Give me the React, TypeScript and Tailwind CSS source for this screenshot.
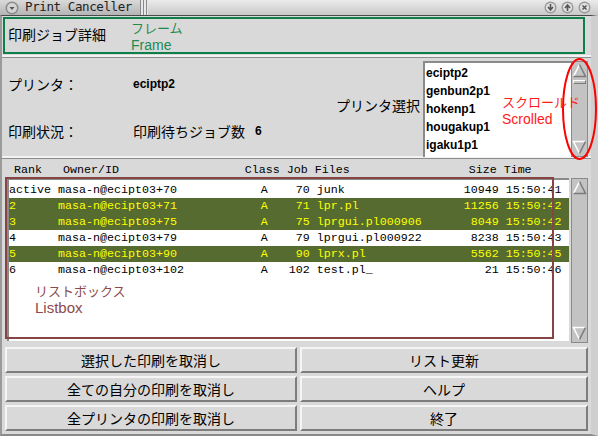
import React from 'react'

const jp = "font-['Noto_Sans_CJK_JP','Noto_Sans',sans-serif]"
const mono = "font-['Liberation_Mono',monospace]"
const bold = "font-['Liberation_Sans',Arial,sans-serif] font-bold"
const sans = "font-['Liberation_Sans',Arial,sans-serif]"

type Job = { rank: string; owner: string; job: string; file: string; size: string; time: string; sel?: boolean }

const jobs: Job[] = [
  { rank: 'active', owner: 'masa-n@ecipt03+70', job: '70', file: 'junk', size: '10949', time: '15:50:41' },
  { rank: '2', owner: 'masa-n@ecipt03+71', job: '71', file: 'lpr.pl', size: '11256', time: '15:50:42', sel: true },
  { rank: '3', owner: 'masa-n@ecipt03+75', job: '75', file: 'lprgui.pl000906', size: '8049', time: '15:50:42', sel: true },
  { rank: '4', owner: 'masa-n@ecipt03+79', job: '79', file: 'lprgui.pl000922', size: '8238', time: '15:50:43' },
  { rank: '5', owner: 'masa-n@ecipt03+90', job: '90', file: 'lprx.pl', size: '5562', time: '15:50:45', sel: true },
  { rank: '6', owner: 'masa-n@ecipt03+102', job: '102', file: 'test.pl_', size: '21', time: '15:50:46' },
]

const printers = ['eciptp2', 'genbun2p1', 'hokenp1', 'hougakup1', 'igaku1p1']

const header =
  ' Rank'.padEnd(8) + 'Owner/ID'.padEnd(26) + 'Class Job ' + 'Files'.padEnd(22) + 'Size Time'

const rowText = (j: Job) =>
  j.rank.padEnd(7) + j.owner.padEnd(29) + 'A' + j.job.padStart(6) + ' ' + j.file.padEnd(20) + j.size.padStart(6) + ' ' + j.time

const Arrow = ({ up }: { up?: boolean }) => (
  <svg width="15" height="15" viewBox="0 0 15 15" className="block">
    {up ? (
      <>
        <polyline points="1.5,13.5 7.5,1.5" stroke="#ffffff" strokeWidth="1.5" fill="none" />
        <polyline points="7.5,1.5 13.5,13.5 1.5,13.5" stroke="#7a7a7a" strokeWidth="1.5" fill="none" />
      </>
    ) : (
      <>
        <polyline points="13.5,1.5 1.5,1.5 7.5,13.5" stroke="#ffffff" strokeWidth="1.5" fill="none" />
        <polyline points="7.5,13.5 13.5,1.5" stroke="#7a7a7a" strokeWidth="1.5" fill="none" />
      </>
    )}
  </svg>
)

const TitleButton = ({ kind }: { kind: 'down' | 'up' | 'close' }) => (
  <svg width="13" height="13" viewBox="0 0 13 13">
    <circle cx="6.5" cy="6.5" r="6" fill="#9a9a9a" />
    <circle cx="6.5" cy="6.5" r="4.6" fill="#e0e0e0" />
    {kind === 'down' && <path d="M6.5 3v5M4 6l2.5 3L9 6" stroke="#555" strokeWidth="1.6" fill="none" />}
    {kind === 'up' && <path d="M6.5 10V5M4 7l2.5-3L9 7" stroke="#555" strokeWidth="1.6" fill="none" />}
    {kind === 'close' && <path d="M4.5 4.5l4 4M8.5 4.5l-4 4" stroke="#555" strokeWidth="1.5" fill="none" />}
  </svg>
)

const Btn = ({ label }: { label: string }) => (
  <button className={`h-[26px] w-full bg-[#d9d9d9] border-2 border-t-[#f5f5f5] border-l-[#f5f5f5] border-b-[#7d7d7d] border-r-[#7d7d7d] text-[14px] text-black leading-none ${jp}`}>
    {label}
  </button>
)

export default function App() {
  return (
    <div className="relative w-[598px] h-[436px] bg-[#d9d9d9] overflow-hidden text-black">
      {/* title bar */}
      <div className="flex h-[15px] items-center bg-gradient-to-b from-[#ebebeb] to-[#c9c9c9]">
        <div className="flex h-full w-[140px] items-center gap-[6px] pl-[5px] bg-gradient-to-b from-[#dadada] to-[#b4b4b4]">
          <svg width="14" height="14" viewBox="0 0 14 14">
            <circle cx="7" cy="7" r="6.5" fill="#8a8a8a" />
            <circle cx="7" cy="7" r="5" fill="#d4d4d4" />
            <path d="M4.5 6h5L7 9z" fill="#555" />
          </svg>
          <span className="text-[12.5px] leading-none text-[#222] tracking-[-0.4px] font-['DejaVu_Sans_Mono',monospace]">Print Canceller</span>
        </div>
        <div className="h-full w-[8px] bg-[repeating-linear-gradient(90deg,#8a8a8a_0px,#8a8a8a_1px,#e8e8e8_1px,#e8e8e8_3px)]" />
        <div className="flex-1" />
        <div className="flex items-center gap-[4px] pr-[7px]">
          <TitleButton kind="down" />
          <TitleButton kind="up" />
          <TitleButton kind="close" />
        </div>
      </div>

      {/* window body */}
      <div className="flex flex-col h-[421px] border-t border-[#4a4a4a] border-l-2 border-l-[#9a9a9a] border-r-[7px] border-r-[#cfcfcf] border-b-2 border-b-[#8a8a8a]">
        {/* section 1 */}
        <div className="flex h-[41px] items-center pl-[6px] pb-[2px] border-b-2 border-b-[#f2f2f2]">
          <span className={`text-[14px] ${jp}`}>印刷ジョブ詳細</span>
        </div>

        {/* section 2 */}
        <div className="flex h-[101px] border-t border-[#8c8c8c] border-b-2 border-b-[#f2f2f2]">
          <div className="flex w-[331px] flex-col gap-[29px] pl-[6px] pt-[17px]">
            <div className="flex h-[18px] items-center">
              <span className={`w-[125px] text-[14px] ${jp}`}>プリンタ：</span>
              <span className={`text-[12px] ${bold}`}>eciptp2</span>
            </div>
            <div className="flex h-[18px] items-center">
              <span className={`w-[125px] text-[14px] ${jp}`}>印刷状況：</span>
              <span className={`text-[14px] ${jp}`}>印刷待ちジョブ数</span>
              <span className={`ml-[10px] text-[12px] ${bold}`}>6</span>
            </div>
          </div>
          <div className="flex w-[90px] items-center justify-end pr-[3px] pb-[4px]">
            <span className={`text-[14px] ${jp}`}>プリンタ選択</span>
          </div>
          <div className="mt-[3px] h-[96px] w-[148px] bg-white border-t-2 border-l-2 border-[#8a8a8a] pl-[1px] pt-[1px]">
            {printers.map((p) => (
              <div key={p} className={`h-[18px] text-[12px] leading-[18px] ${bold}`}>{p}</div>
            ))}
          </div>
          <div className="mt-[3px] flex h-[96px] w-[17px] flex-col items-center justify-between bg-[#c3c3c3] border border-[#8a8a8a] py-[1px]">
            <Arrow up />
            <div className="mt-[2px] h-[4px] w-[13px] border-t border-l border-white border-b border-r border-b-[#7a7a7a] border-r-[#7a7a7a]" />
            <div className="flex-1" />
            <Arrow />
          </div>
        </div>

        {/* section 3 */}
        <div className="flex flex-col h-[186px] border-t border-[#8c8c8c]">
          <div className={`h-[19px] pl-[5px] pt-[4px] text-[11.667px] leading-[14px] whitespace-pre ${mono}`}>{header}</div>
          <div className="flex flex-1 pl-[5px]">
            <div className="h-[163px] w-[562px] bg-white border-t-2 border-l-2 border-[#8a8a8a] pt-[2px]">
              {jobs.map((j) => (
                <div
                  key={j.job}
                  className={`h-[16px] text-[11.667px] leading-[16px] whitespace-pre ${mono} ${j.sel ? 'bg-[#556b2f] text-[#ffff00]' : 'text-black'}`}
                >
                  {rowText(j)}
                </div>
              ))}
            </div>
            <div className="ml-[2px] flex h-[165px] w-[17px] flex-col justify-between bg-[#c3c3c3] border border-[#8a8a8a] py-[1px] items-center">
              <Arrow up />
              <Arrow />
            </div>
          </div>
        </div>

        {/* buttons */}
        <div className="grid grid-cols-[292px_288px] gap-x-[3px] gap-y-[3px] pl-[3px] pt-[3px]">
          <Btn label="選択した印刷を取消し" />
          <Btn label="リスト更新" />
          <Btn label="全ての自分の印刷を取消し" />
          <Btn label="ヘルプ" />
          <Btn label="全プリンタの印刷を取消し" />
          <Btn label="終了" />
        </div>
      </div>

      {/* annotation overlays */}
      <div className="absolute left-[3px] top-[17px] h-[37px] w-[582px] border-2 border-[#0f7f4a]" />
      <div className="absolute left-[131px] top-[19px] flex flex-col text-[#1e8a50]">
        <span className={`h-[18px] text-[13px] leading-[18px] ${jp}`}>フレーム</span>
        <span className={`h-[16px] text-[14px] leading-[16px] ${sans}`}>Frame</span>
      </div>

      <svg className="absolute left-[561px] top-[57px]" width="37" height="104" viewBox="0 0 37 104">
        <ellipse cx="18.5" cy="52" rx="16.5" ry="50" stroke="#ff0000" strokeWidth="2" fill="none" />
      </svg>
      <div className="absolute left-[502px] top-[93px] flex flex-col text-[#ff1a1a]">
        <span className={`h-[18px] text-[13px] leading-[18px] ${jp}`}>スクロールド</span>
        <span className={`h-[16px] text-[14px] leading-[16px] ${sans}`}>Scrolled</span>
      </div>

      <div className="absolute left-[5px] top-[177px] h-[162px] w-[549px] border-2 border-[#874444]" />
      <div className="absolute left-[35px] top-[282px] flex flex-col text-[#8c4a4a]">
        <span className={`h-[18px] text-[13px] leading-[18px] ${jp}`}>リストボックス</span>
        <span className={`h-[16px] text-[15px] leading-[16px] ${sans}`}>Listbox</span>
      </div>
    </div>
  )
}
